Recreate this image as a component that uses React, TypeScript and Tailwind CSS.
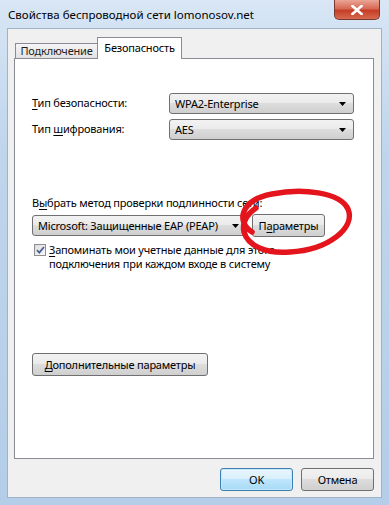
import React from 'react';

const btnBg =
  'bg-[linear-gradient(#f2f2f2,#ebebeb_45%,#dddddd_50%,#cfcfcf)] border border-[#707070] rounded-[3px]';

const Arrow = ({ color = '#000' }: { color?: string }) => (
  <svg width="7" height="4" viewBox="0 0 7 4" className="shrink-0">
    <path d="M0 0h7L3.5 4z" fill={color} />
  </svg>
);

const Combo = ({ value, className }: { value: string; className?: string }) => (
  <div className={`flex h-[21px] items-center justify-between pl-[5px] pr-[7px] ${btnBg} ${className ?? ''}`}>
    <span className="whitespace-nowrap leading-none">{value}</span>
    <Arrow />
  </div>
);

const Button = ({ children, className }: { children: React.ReactNode; className?: string }) => (
  <div className={`flex h-[23px] items-center justify-center ${btnBg} ${className ?? ''}`}>
    <span className="whitespace-nowrap leading-none">{children}</span>
  </div>
);

export default function App() {
  return (
    <div className="relative flex h-[505px] w-[389px] flex-col bg-[linear-gradient(180deg,#d8e6f5,#bfd5ec_30%,#b4cde8)] font-['Noto_Sans',sans-serif] text-[11px] tracking-[-0.2px] text-black">
      {/* title bar */}
      <div className="flex h-[28px] items-start justify-between">
        <div className="pl-[8px] pt-[7px] text-[11.5px] leading-[15px] tracking-normal">Свойства беспроводной сети lomonosov.net</div>
        <div className="mr-[9px] flex h-[20px] w-[46px] items-center justify-center rounded-b-[5px] border border-t-0 border-[#7b3a30] bg-[linear-gradient(#eba595,#d66a55_45%,#c63d27_55%,#d66a4f)]">
          <svg width="12" height="10" viewBox="0 0 12 10">
            <path d="M1.5 1l9 8M10.5 1l-9 8" stroke="#fff" strokeWidth="2.6" strokeLinecap="square" />
          </svg>
        </div>
      </div>

      {/* client area */}
      <div className="mx-[7px] mb-[7px] flex flex-1 flex-col border border-[#9fb2c6] bg-[#f0f0f0] pl-[6px] pr-[7px] pt-[8px]">
        {/* tabs */}
        <div className="flex h-[21px] items-end pl-[1px]">
          <div className="flex h-[15px] w-[83px] items-start justify-center border border-b-0 border-[#898c95] bg-[linear-gradient(#f5f5f5,#e2e2e2)] text-[#1e1e1e]">
            <span className="leading-[13px]">Подключение</span>
          </div>
          <div className="relative z-10 -ml-px -mb-px flex h-[22px] w-[85px] items-start justify-center border border-b-0 border-[#898c95] bg-white">
            <span className="pt-[2px] leading-[15px]">Безопасность</span>
          </div>
        </div>

        {/* panel */}
        <div className="flex h-[401px] flex-col border border-[#898c95] bg-white pl-[17px]">
          <div className="mt-[34px] grid grid-cols-[137px_185px] gap-y-[5px]">
            <div className="flex items-center">
              <span><span className="underline underline-offset-2">Т</span>ип безопасности:</span>
            </div>
            <Combo value="WPA2-Enterprise" />
            <div className="flex items-center">
              <span>Тип <span className="underline underline-offset-2">ш</span>ифрования:</span>
            </div>
            <Combo value="AES" />
          </div>

          <div className="mt-[55px] leading-[15px]">
            В<span className="underline underline-offset-2">ы</span>брать метод проверки подлинности сети:
          </div>

          <div className="mt-[4px] flex items-center gap-[5px]">
            <Combo value="Microsoft: Защищенные EAP (PEAP)" className="w-[215px]" />
            <Button className="w-[73px]">
              П<span className="underline underline-offset-2">а</span>раметры
            </Button>
          </div>

          <div className="mt-[6px] flex items-start gap-[3px] pl-[2px]">
            <div className="mt-[1px] flex h-[12px] w-[12px] shrink-0 items-center justify-center border border-[#8e8f8f] bg-[linear-gradient(135deg,#dcdcdc,#fbfbfb)]">
              <svg width="9" height="8" viewBox="0 0 9 8">
                <path d="M1 4.2l2.3 2.4L8 1" stroke="#4a5f97" strokeWidth="1.8" fill="none" />
              </svg>
            </div>
            <div className="leading-[14px]">
              <span className="underline underline-offset-2">З</span>апоминать мои учетные данные для этого
              <br />
              подключения при каждом входе в систему
            </div>
          </div>

          <Button className="mt-[82px] w-[176px]">
            <span className="underline underline-offset-2">Д</span>ополнительные параметры
          </Button>
        </div>

        {/* dialog buttons */}
        <div className="mt-[9px] flex justify-end gap-[8px]">
          <div className="flex h-[23px] w-[73px] items-center justify-center rounded-[3px] border border-[#3c7fb1] bg-[linear-gradient(#eaf6fd,#d9f0fc_45%,#bee6fd_50%,#a7d9f5)] shadow-[inset_0_0_0_1px_#c8e8fb]">
            <span className="leading-none">OK</span>
          </div>
          <Button className="w-[73px]">Отмена</Button>
        </div>
      </div>

      {/* red hand-drawn ellipse */}
      <svg className="pointer-events-none absolute left-[232px] top-[186px]" width="124" height="72" viewBox="0 0 124 72">
        <path
          d="M20 46 C4 36 8 14 40 8 C70 2 108 6 116 23 C124 42 96 64 58 66 C34 68 16 60 12 46 C10 37 14 29 24 22"
          stroke="#e3141b"
          strokeWidth="5.5"
          fill="none"
          strokeLinecap="round"
        />
      </svg>
    </div>
  );
}
